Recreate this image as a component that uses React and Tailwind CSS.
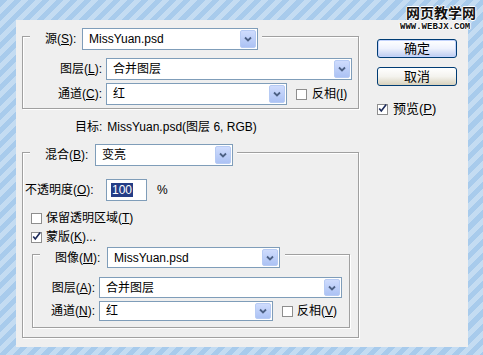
import React from 'react';

// 下拉框右侧的蓝色箭头按钮
function Arrow() {
  return (
    <div className="w-[16px] m-[1px] rounded-[2px] border border-[#b7cbf4] bg-gradient-to-b from-[#cfdcfd] to-[#acc2f4] flex items-center justify-center">
      <svg width="8" height="6" viewBox="0 0 8 6">
        <path d="M1 1.5 L4 4.5 L7 1.5" fill="none" stroke="#4d6185" strokeWidth="1.8" />
      </svg>
    </div>
  );
}

function Select({ value, className }) {
  return (
    <div className={`flex items-stretch bg-white border border-[#7f9db9] ${className}`}>
      <span className="flex-1 flex items-center pl-[6px] text-[12px] leading-none">{value}</span>
      <Arrow />
    </div>
  );
}

function Check({ checked }) {
  return (
    <span className="w-[11px] h-[11px] border border-[#8e8e8e] bg-white flex items-center justify-center shrink-0">
      {checked && (
        <svg width="11" height="11" viewBox="0 0 11 11" className="-mt-[2px]">
          <path d="M1.5 5.5 L4 8.5 L10 0.5" fill="none" stroke="#1c2a5a" strokeWidth="2" />
        </svg>
      )}
    </span>
  );
}

const etched = 'border border-[#a0a0a0] shadow-[1px_1px_0_#fff,inset_1px_1px_0_#fff]';

export default function App() {
  return (
    <div className="relative w-[483px] h-[355px] overflow-hidden pl-[16px] pt-[20px] bg-[repeating-linear-gradient(135deg,#a8cbec_0px,#a8cbec_5px,#c4dcf2_5px,#c4dcf2_10px)] font-['Liberation_Sans','Noto_Sans_CJK_SC',sans-serif] text-[12px] text-black">
      <div className="w-[452px] h-[327px] bg-[#efefef] flex">
        {/* 左侧 */}
        <div className="ml-[6px] w-[337px] pt-[16px] flex flex-col">
          {/* 源 */}
          <div className={`${etched} flex flex-col pb-[3px]`}>
            <div className="-mt-[9px] ml-[7px] self-start flex items-center bg-[#efefef] pl-[15px] pr-[4px]">
              <span className="w-[37px]">源(<u>S</u>):</span>
              <Select value="MissYuan.psd" className="w-[176px] h-[22px]" />
            </div>
            <div className="mt-[8px] flex items-center">
              <span className="w-[83px] text-right pr-[4px]">图层(<u>L</u>):</span>
              <Select value="合并图层" className="w-[246px] h-[22px]" />
            </div>
            <div className="mt-[3px] flex items-center">
              <span className="w-[83px] text-right pr-[4px]">通道(<u>C</u>):</span>
              <Select value="红" className="w-[181px] h-[22px]" />
              <span className="ml-[9px]"><Check /></span>
              <span className="ml-[5px]">反相(<u>I</u>)</span>
            </div>
          </div>

          <div className="mt-[11px] pl-[53px] h-[14px] leading-[14px]">
            目标:<span className="ml-[5px]">MissYuan.psd(图层 6, RGB)</span>
          </div>

          {/* 混合 */}
          <div className={`${etched} mt-[18px] flex flex-col pb-[9px]`}>
            <div className="-mt-[9px] ml-[7px] self-start flex items-center bg-[#efefef] pl-[15px] pr-[4px]">
              <span className="w-[50px]">混合(<u>B</u>):</span>
              <Select value="变亮" className="w-[138px] h-[22px]" />
            </div>
            <div className="mt-[13px] flex items-center pl-[2px]">
              <span className="w-[81px]">不透明度(<u>O</u>):</span>
              <div className="w-[41px] h-[22px] bg-white border border-[#7f9db9] flex items-center pl-[4px]">
                <span className="bg-[#243d86] text-white px-[1px] leading-[14px]">100</span>
              </div>
              <span className="ml-[10px]">%</span>
            </div>
            <div className="mt-[10px] h-[14px] flex items-center pl-[8px]">
              <Check />
              <span className="ml-[4px]">保留透明区域(<u>T</u>)</span>
            </div>
            <div className="mt-[5px] h-[14px] flex items-center pl-[8px]">
              <Check checked />
              <span className="ml-[4px]">蒙版(<u>K</u>)...</span>
            </div>

            {/* 图像 */}
            <div className={`${etched} mt-[10px] ml-[9px] w-[318px] flex flex-col pb-[6px]`}>
              <div className="-mt-[8px] ml-[7px] self-start flex items-center bg-[#efefef] pl-[15px] pr-[5px]">
                <span className="w-[52px]">图像(<u>M</u>):</span>
                <Select value="MissYuan.psd" className="w-[173px] h-[21px]" />
              </div>
              <div className="mt-[9px] flex items-center">
                <span className="w-[66px] text-right pr-[4px]">图层(<u>A</u>):</span>
                <Select value="合并图层" className="w-[243px] h-[21px]" />
              </div>
              <div className="mt-[3px] flex items-center">
                <span className="w-[66px] text-right pr-[4px]">通道(<u>N</u>):</span>
                <Select value="红" className="w-[174px] h-[20px]" />
                <span className="ml-[9px]"><Check /></span>
                <span className="ml-[4px]">反相(<u>V</u>)</span>
              </div>
            </div>
          </div>
        </div>

        {/* 右侧按钮 */}
        <div className="ml-[18px] pt-[19px] flex flex-col">
          <button className="w-[80px] h-[19px] rounded-[3px] border border-[#003c74] bg-gradient-to-b from-[#ffffff] via-[#eef2fd] to-[#bccbf0] shadow-[inset_0_0_0_1px_#c2d3fc] text-[13px] leading-none flex items-center justify-center">
            确定
          </button>
          <button className="mt-[9px] w-[80px] h-[19px] rounded-[3px] border border-[#003c74] bg-gradient-to-b from-[#ffffff] via-[#f4f3ee] to-[#d8d2bd] text-[13px] leading-none flex items-center justify-center">
            取消
          </button>
          <div className="mt-[16px] h-[14px] flex items-center">
            <Check checked />
            <span className="ml-[5px] text-[13px]">预览(<u>P</u>)</span>
          </div>
        </div>
      </div>

      {/* 水印 */}
      <div className="absolute left-[406px] top-[5px] text-[14px] leading-[16px] font-bold text-[#111] [text-shadow:1px_0_0_#fff,-1px_0_0_#fff,0_1px_0_#fff,0_-1px_0_#fff]">
        网页教学网
      </div>
      <div className="absolute left-[400px] top-[22px] text-[9px] leading-[10px] font-bold font-['Liberation_Mono',monospace] text-[#111] [text-shadow:1px_0_0_#fff,-1px_0_0_#fff,0_1px_0_#fff,0_-1px_0_#fff]">
        WWW.WEBJX.COM
      </div>
    </div>
  );
}
